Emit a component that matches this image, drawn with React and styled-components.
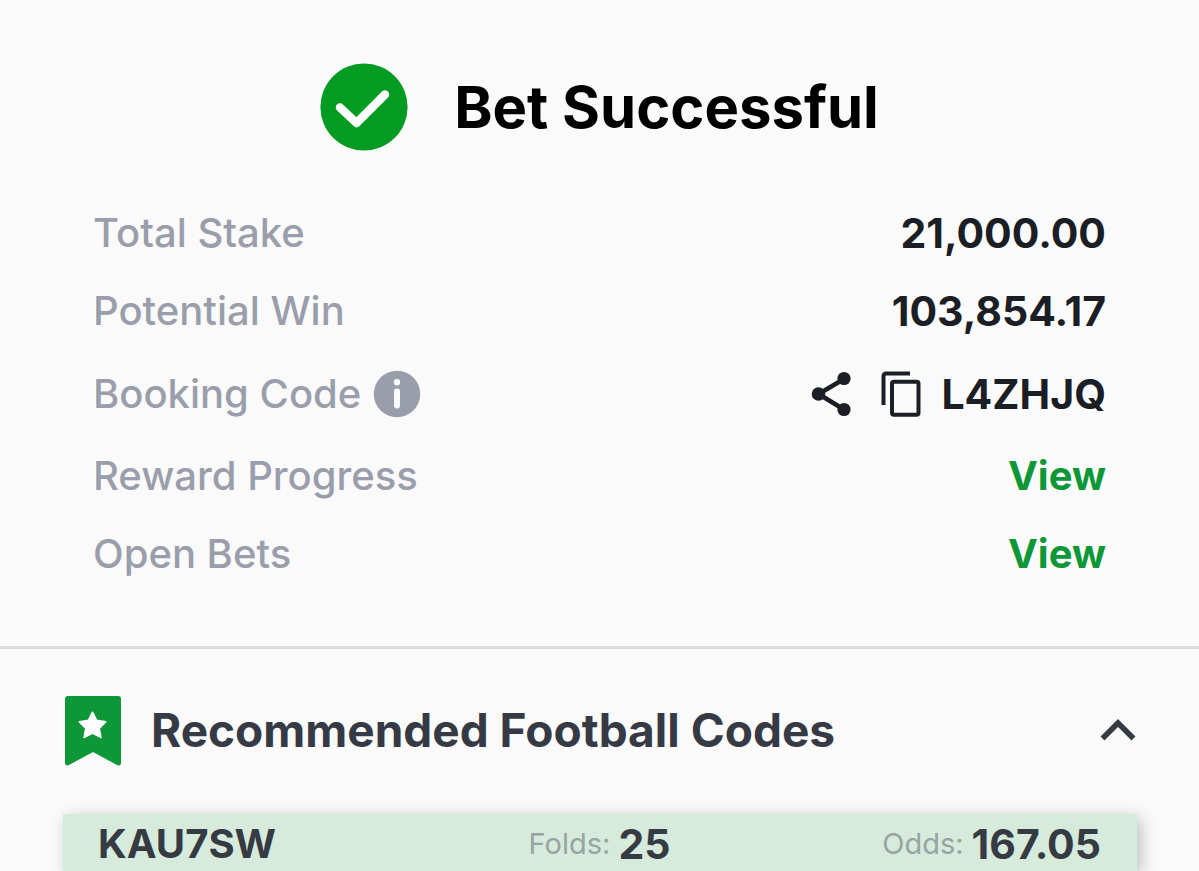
import React, { useState } from "react";
import styled, { createGlobalStyle } from "styled-components";

const GlobalStyle = createGlobalStyle`
  * { box-sizing: border-box; }
  body {
    margin: 0;
    background: #fafafb;
    font-family: Inter, "Liberation Sans", sans-serif;
    -webkit-font-smoothing: antialiased;
  }
  button { font: inherit; color: inherit; background: none; border: 0; padding: 0; cursor: pointer; }
  svg { display: block; flex: none; }
`;

const Page = styled.main`
  display: flex;
  flex-direction: column;
  min-height: 100vh;
  overflow: hidden;
`;

const Header = styled.header`
  display: flex;
  align-items: center;
  justify-content: center;
  gap: 46px;
  padding-top: 63px;
`;

const Title = styled.h1`
  margin: 0;
  font-size: 58px;
  line-height: 88px;
  font-weight: 700;
  color: #000;
`;

const Details = styled.dl`
  display: flex;
  flex-direction: column;
  gap: 30px;
  margin: 0;
  padding: 58px 93px 68px 93px;
  font-size: 40px;
  line-height: 48px;
`;

const Row = styled.div`
  display: flex;
  align-items: center;
  justify-content: space-between;
  min-height: ${({ $tall }) => ($tall ? 57 : 48)}px;
`;

const Label = styled.dt`
  display: flex;
  align-items: center;
  gap: 12px;
  font-weight: 500;
  color: #9a9eab;
`;

const Value = styled.dd`
  display: flex;
  align-items: center;
  margin: 0;
  font-size: 41px;
  font-weight: 700;
  color: #1b1e25;
`;

const IconButton = styled.button`
  margin-right: ${({ $gap }) => $gap || 0}px;
`;

const ViewLink = styled.a`
  font-size: 40px;
  color: #0d9737;
  text-decoration: none;
`;

const Section = styled.section`
  display: flex;
  flex: 1;
  flex-direction: column;
  padding: 45px 62px 0 63px;
  border-top: 3px solid #dcdde3;
`;

const SectionHeader = styled.div`
  display: flex;
  align-items: center;
  padding-bottom: 48px;
`;

const SectionTitle = styled.h2`
  flex: 1;
  margin: 0 0 0 28px;
  font-size: 46px;
  line-height: 72px;
  font-weight: 700;
  color: #353a45;
`;

const CodeCard = styled.article`
  display: flex;
  flex: 1;
  align-items: flex-start;
  justify-content: space-between;
  padding: 6px 36px 0 35px;
  background: #d6ebdb;
  box-shadow: 4px 4px 16px rgba(0, 0, 0, 0.24);
`;

const Code = styled.strong`
  flex: 1;
  font-size: 40px;
  line-height: 48px;
  font-weight: 700;
  color: #353a43;
`;

const Stat = styled.span`
  display: flex;
  flex: 1;
  align-items: center;
  justify-content: ${({ $align }) => $align};
  gap: 8px;
  font-size: 29px;
  line-height: 48px;
  color: #98a4a3;
`;

const StatValue = styled.b`
  font-size: 41px;
  font-weight: 700;
  color: #353a43;
`;

const CheckIcon = () => (
  <svg width="88" height="88" viewBox="0 0 88 88" aria-hidden="true">
    <circle cx="44" cy="44" r="43.6" fill="#039b22" />
    <path d="M20 44.5 36.5 60 65 31.5" fill="none" stroke="#fff" strokeWidth="8.5" strokeLinecap="round" strokeLinejoin="round" />
  </svg>
);

const InfoIcon = () => (
  <svg width="48" height="48" viewBox="0 0 48 48" aria-hidden="true">
    <circle cx="24" cy="24" r="23.2" fill="#9a9eab" />
    <circle cx="24" cy="12.2" r="3.2" fill="#fafafb" />
    <path d="M24 21.5V35.5" stroke="#fafafb" strokeWidth="6" strokeLinecap="round" />
  </svg>
);

const ShareIcon = () => (
  <svg width="40" height="46" viewBox="0 0 40 46" aria-hidden="true">
    <path d="M33 8 7.5 23 33 38.5" fill="none" stroke="#1b1e25" strokeWidth="4.6" />
    <circle cx="33" cy="7.5" r="6.6" fill="#1b1e25" />
    <circle cx="7.5" cy="23" r="6.8" fill="#1b1e25" />
    <circle cx="33" cy="38.5" r="6.6" fill="#1b1e25" />
  </svg>
);

const CopyIcon = () => (
  <svg width="40" height="46" viewBox="0 0 40 46" fill="none" stroke="#1b1e25" strokeWidth="4" aria-hidden="true">
    <path d="M29 2.5H5A2.5 2.5 0 0 0 2.5 5V34" />
    <rect x="11" y="10.7" width="26.5" height="33" rx="2" />
  </svg>
);

const BookmarkIcon = () => (
  <svg width="60" height="72" viewBox="0 0 60 72" aria-hidden="true">
    <path d="M5 2H55Q58 2 58 5V68.5Q58 72.500 54 71L30 58 6 71Q2 72.500 2 68.500V5Q2 2 5 2Z" fill="#0d9737" />
    <path d="M29.5 18.5 33.5 26.6 42.5 27.9 36 34.2 37.7 43.2 29.5 38.9 21.3 43.2 23 34.2 16.5 27.9 25.5 26.6Z" fill="#fff" stroke="#fff" strokeWidth="2" strokeLinejoin="round" />
  </svg>
);

const ChevronIcon = ({ open }) => (
  <svg width="38" height="24" viewBox="0 0 38 24" aria-hidden="true">
    <path d={open ? "M3.5 20.5 19 5 34.5 20.5" : "M3.5 3.5 19 19 34.5 3.5"} fill="none" stroke="#353a43" strokeWidth="5.6" />
  </svg>
);

export default function App() {
  const [open, setOpen] = useState(true);
  return (
    <>
      <GlobalStyle />
      <Page>
        <Header>
          <CheckIcon />
          <Title>Bet Successful</Title>
        </Header>
        <Details>
          <Row>
            <Label>Total Stake</Label>
            <Value>21,000.00</Value>
          </Row>
          <Row>
            <Label>Potential Win</Label>
            <Value>103,854.17</Value>
          </Row>
          <Row $tall>
            <Label>
              Booking Code
              <IconButton type="button" aria-label="About booking codes"><InfoIcon /></IconButton>
            </Label>
            <Value>
              <IconButton type="button" aria-label="Share" $gap={30}><ShareIcon /></IconButton>
              <IconButton type="button" aria-label="Copy" $gap={20}><CopyIcon /></IconButton>
              L4ZHJQ
            </Value>
          </Row>
          <Row>
            <Label>Reward Progress</Label>
            <Value><ViewLink href="#reward-progress">View</ViewLink></Value>
          </Row>
          <Row>
            <Label>Open Bets</Label>
            <Value><ViewLink href="#open-bets">View</ViewLink></Value>
          </Row>
        </Details>
        <Section>
          <SectionHeader>
            <BookmarkIcon />
            <SectionTitle>Recommended Football Codes</SectionTitle>
            <IconButton type="button" aria-label="Toggle recommended codes" aria-expanded={open} onClick={() => setOpen(!open)}>
              <ChevronIcon open={open} />
            </IconButton>
          </SectionHeader>
          {open && (
            <CodeCard>
              <Code>KAU7SW</Code>
              <Stat $align="center">Folds: <StatValue>25</StatValue></Stat>
              <Stat $align="flex-end">Odds: <StatValue>167.05</StatValue></Stat>
            </CodeCard>
          )}
        </Section>
      </Page>
    </>
  );
}
